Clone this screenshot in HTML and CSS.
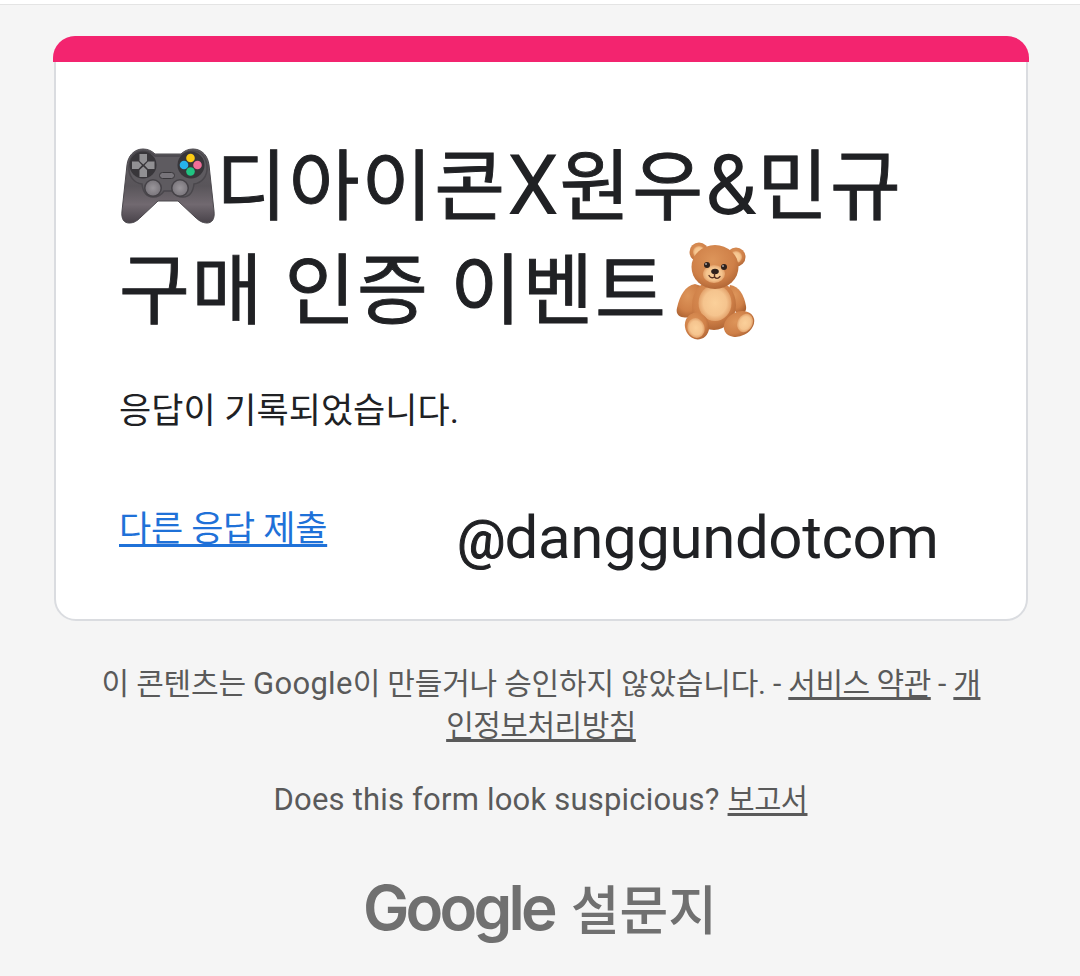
FILE: index.html
```html
<!DOCTYPE html>
<html lang="ko">
<head>
    <meta charset="UTF-8">
    <meta name="viewport" content="width=device-width, initial-scale=1.0">
    <title>디아이콘X원우&amp;민규 구매 인증 이벤트</title>
    <link rel="stylesheet" href="styles.css">
</head>
<body>

    <main class="card">
        <div class="card-bar"></div>
        <h1>
            <svg class="gamepad" viewBox="0 0 94 76" role="img" aria-label="게임 컨트롤러">
                <defs>
                    <linearGradient id="padBody" x1="0" y1="0" x2="0" y2="1">
                        <stop offset="0" stop-color="#605e63"/>
                        <stop offset=".5" stop-color="#59555a"/>
                        <stop offset=".75" stop-color="#716970"/>
                        <stop offset="1" stop-color="#49434a"/>
                    </linearGradient>
                    <radialGradient id="stick">
                        <stop offset="0" stop-color="#9a969b"/>
                        <stop offset="1" stop-color="#7c787e"/>
                    </radialGradient>
                </defs>
                <path d="M22 1C27 1 31 3 34 6H60C63 3 67 1 72 1C81 1 87 8 88 17L93 63C94 71 91 75 86 75C81 75 77 72 74 69L57 53H37L20 69C16 73 13 75 8 75C3 75 0 71 1 63L6 17C7 8 13 1 22 1Z" fill="url(#padBody)" stroke="#4b484d" stroke-width="1"/>
                <path d="M8 18C9 8 14 3 22 3C28 3 31 5 34 8H60C63 5 67 3 72 3C80 3 85 9 86 18C87 29 80 35 73 36C72 44 69 49 62 49C56 49 53 46 51 43H43C41 46 37 49 32 49C25 49 22 44 21 36C13 35 7 28 8 18Z" fill="#5e5b60" stroke="#4a474c" stroke-width="1.500"/>
                <circle cx="22" cy="17" r="13.500" fill="#38363a"/>
                <circle cx="70" cy="17" r="13.500" fill="#38363a"/>
                <path d="M18.500 6H26V13L22.300 16.500L18.500 13ZM18.500 29H26V22L22.300 18.500L18.500 22ZM11 13.500V21H17.500L21 17.300L17.500 13.500ZM33.500 13.500V21H27L23.500 17.300L27 13.500Z" fill="#919093"/>
                <circle cx="69.500" cy="10" r="4.300" fill="#fbcb14"/>
                <circle cx="63" cy="17" r="4.300" fill="#27b3ed"/>
                <circle cx="76.500" cy="17" r="4.300" fill="#f06f99"/>
                <circle cx="69.500" cy="23.500" r="4.300" fill="#20c482"/>
                <rect x="38.500" y="24.500" width="15" height="6" rx="3" fill="#77747a" stroke="#38363a"/>
                <circle cx="32" cy="40" r="9" fill="#454247"/>
                <circle cx="59" cy="40" r="9" fill="#454247"/>
                <circle cx="32" cy="40" r="7.500" fill="url(#stick)"/>
                <circle cx="59" cy="40" r="7.500" fill="url(#stick)"/>
            </svg><span class="line-one">디아이콘<span class="latin">X</span>원우<span class="latin">&amp;</span>민규</span><br>
            <span class="line-two">구매 인증 이벤트</span><svg class="bear" viewBox="0 0 80 98" role="img" aria-label="곰 인형">
                <defs>
                    <radialGradient id="fur" cx=".45" cy=".35" r=".7">
                        <stop offset="0" stop-color="#dd955a"/>
                        <stop offset=".65" stop-color="#cf8048"/>
                        <stop offset="1" stop-color="#ac6232"/>
                    </radialGradient>
                    <radialGradient id="cream">
                        <stop offset="0" stop-color="#fbd09a"/>
                        <stop offset=".7" stop-color="#f5c48e"/>
                        <stop offset="1" stop-color="#e3a26b"/>
                    </radialGradient>
                </defs>
                <circle cx="23" cy="10" r="9.500" fill="url(#fur)"/>
                <circle cx="23" cy="10" r="6" fill="url(#cream)"/>
                <circle cx="60" cy="15" r="9.500" fill="url(#fur)"/>
                <circle cx="60" cy="15" r="6" fill="url(#cream)"/>
                <path d="M19 42C9 44 4 53 1 66C-1 74 6 77 13 75C22 71 27 54 25 44Z" fill="url(#fur)"/>
                <path d="M54 43C63 44 68 53 70 64C71 71 66 73 61 71L50 60Z" fill="url(#fur)"/>
                <ellipse cx="38" cy="63" rx="22" ry="25" fill="url(#fur)"/>
                <ellipse cx="39" cy="61" rx="16.500" ry="18" fill="url(#cream)"/>
                <ellipse cx="39" cy="25" rx="23.500" ry="22" fill="url(#fur)"/>
                <ellipse cx="38" cy="32" rx="11" ry="9" fill="url(#cream)"/>
                <circle cx="31" cy="23" r="3" fill="#2f211c"/>
                <circle cx="48" cy="25" r="3" fill="#2f211c"/>
                <circle cx="30" cy="22" r=".8" fill="#fff"/>
                <circle cx="47" cy="24" r=".8" fill="#fff"/>
                <ellipse cx="39" cy="29.500" rx="3.800" ry="2.800" fill="#2f211c"/>
                <path d="M38.500 32V35M33 33.500Q35 37 38.500 35Q41 38 44 34.500" fill="none" stroke="#583020" stroke-width="1.400" stroke-linecap="round"/>
                <ellipse cx="21" cy="84" rx="12" ry="13.500" transform="rotate(-18 21 84)" fill="url(#fur)"/>
                <ellipse cx="20" cy="86" rx="8.500" ry="10" transform="rotate(-18 20 86)" fill="url(#cream)"/>
                <ellipse cx="63" cy="82" rx="16" ry="12" transform="rotate(-28 63 82)" fill="url(#fur)"/>
                <ellipse cx="69" cy="81" rx="7.500" ry="9.500" transform="rotate(28 69 81)" fill="url(#cream)"/>
            </svg>
        </h1>
        <p class="message">응답이 기록되었습니다.</p>
        <a class="again" href="#">다른 응답 제출</a>
        <span class="watermark"><span class="at">@</span>danggundotcom</span>
    </main>

    <p class="notice">이 콘텐츠는 <span class="latin">Google</span>이 만들거나 승인하지 않았습니다. - <a href="#">서비스 약관</a> - <a href="#">개<br>인정보처리방침</a></p>
    <p class="report">Does this form look suspicious? <a href="#">보고서</a></p>

    <footer>
        <span class="google">Google</span>
        <span class="forms">설문지</span>
    </footer>

</body>
</html>
```
FILE: styles.css
```css
* {
    box-sizing: border-box;
}
body {
    margin: 0;
    height: 976px;
    overflow: hidden;
    border-top: 4px solid #fff;
    background: #f5f5f5;
    box-shadow: inset 0 1px 0 #e4e4e4;
    color: #202124;
    font-family: Roboto, "Noto Sans CJK KR", sans-serif;
}
.card {
    position: relative;
    width: 974px;
    height: 585px;
    margin: 32px 0 0 54px;
    padding: 98px 63px 0;
    background: #fff;
    border: 2px solid #dadce0;
    border-radius: 22px;
}
.card-bar {
    position: absolute;
    top: -2px;
    left: -3px;
    right: -3px;
    height: 26px;
    background: #f3246f;
    border-radius: 22px 22px 0 0;
}
h1 {
    margin: 0;
    font-size: 77px;
    font-weight: 400;
    line-height: 104px;
    white-space: nowrap;
    -webkit-text-stroke: 0.9px #202124;
}
h1 svg {
    -webkit-text-stroke: 0;
}
h1 .latin {
    font-size: 83px;
    line-height: 0;
    letter-spacing: 0.5px;
    -webkit-text-stroke: 0;
}
.gamepad {
    width: 94px;
    height: 76px;
    margin: 0 1px 0 2px;
    vertical-align: -10px;
}
.line-one {
    letter-spacing: 1.9px;
}
.line-two {
    letter-spacing: 1.6px;
}
.bear {
    width: 80px;
    height: 98px;
    margin: -20px 0 -20px 9px;
    vertical-align: -2px;
}
.message {
    margin: 42px 0 0;
    font-size: 35px;
    line-height: 52px;
}
.again {
    display: inline-block;
    margin-top: 66px;
    color: #1f71d8;
    font-size: 35px;
    line-height: 52px;
    letter-spacing: -0.3px;
    text-underline-offset: 3px;
}
.watermark {
    position: absolute;
    left: 401px;
    top: 465px;
    font-size: 60px;
    line-height: 70px;
    letter-spacing: -0.4px;
}
.at {
    font-size: 54px;
    line-height: 0;
    letter-spacing: -1px;
    -webkit-text-stroke: 1px #202124;
}
.notice,
.report {
    margin: 0;
    color: #5a5a5a;
    font-size: 30px;
    line-height: 42px;
    text-align: center;
    white-space: nowrap;
}
.notice {
    margin-top: 42px;
    padding-left: 2px;
    letter-spacing: -0.2px;
}
.notice .latin {
    font-size: 31px;
    line-height: 0;
    letter-spacing: 0.3px;
}
.report {
    margin-top: 32px;
    padding-left: 1px;
    font-size: 31px;
    letter-spacing: 0.2px;
}
.notice a,
.report a {
    color: inherit;
    letter-spacing: -0.5px;
    text-decoration-thickness: 3px;
    text-underline-offset: 3px;
}
.report a {
    font-size: 29.5px;
}
footer {
    display: flex;
    justify-content: center;
    align-items: baseline;
    gap: 17px;
    margin-top: 47px;
    color: #707070;
    line-height: 80px;
}
.google {
    font-family: Inter, sans-serif;
    font-size: 62px;
    font-weight: 600;
    letter-spacing: -3.8px;
}
.forms {
    font-size: 53px;
    font-weight: 500;
}
```
